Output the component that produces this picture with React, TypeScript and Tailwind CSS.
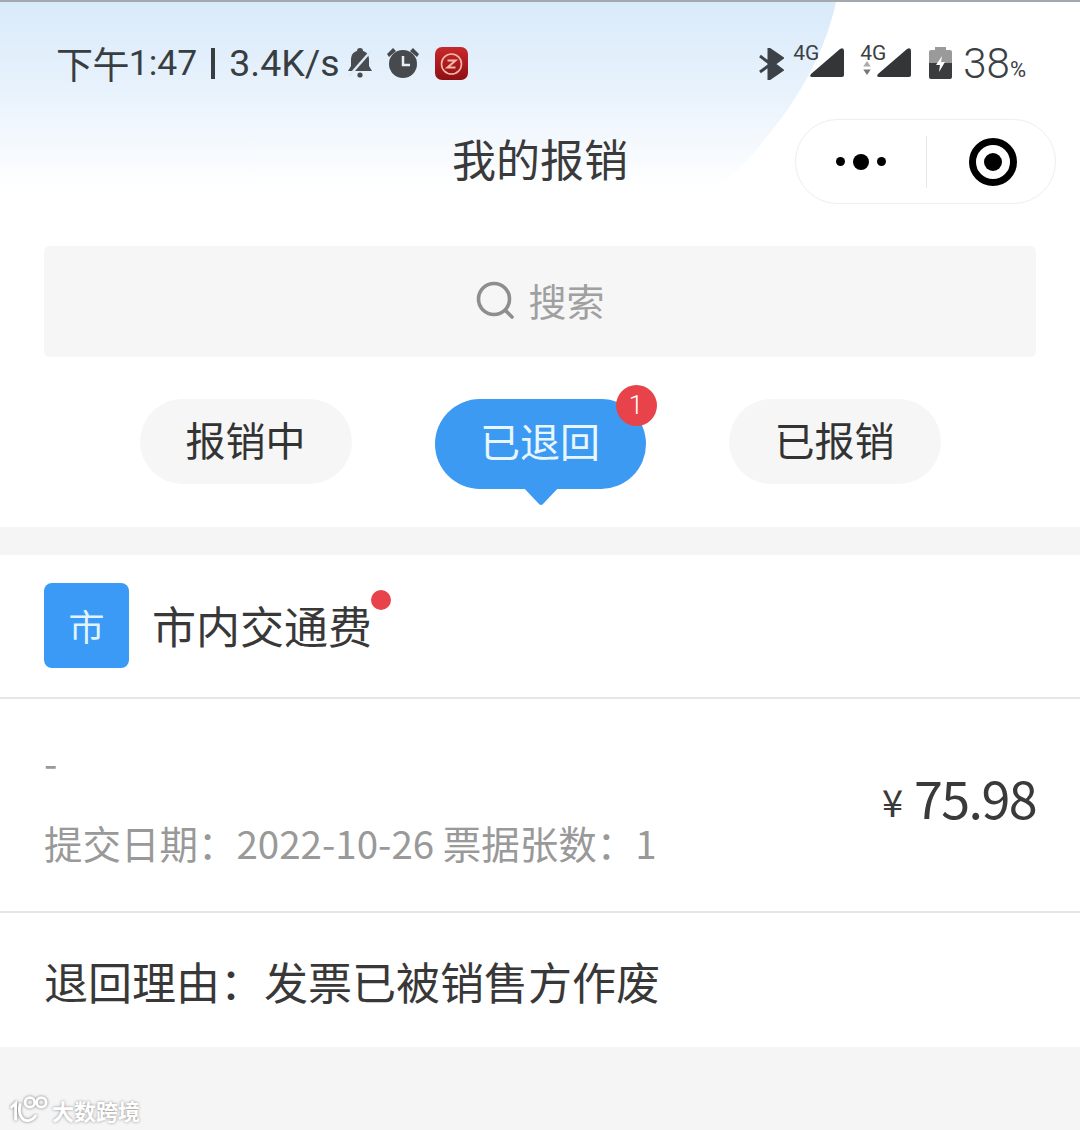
const cjk = "font-['Noto_Sans_CJK_SC','Noto_Sans',sans-serif]"

function Signal({ className = "" }: { className?: string }) {
  return (
    <svg width="36" height="31" viewBox="0 0 36 31" className={className}>
      <path d="M2 27 L31 2 Q35 0 35 4 L35 28 Q35 30 33 30 L3 30 Q0 30 2 27Z" fill="#333537" />
    </svg>
  )
}

function StatusBar() {
  return (
    <div className="flex h-[83px] items-end justify-between pl-[56px] pr-[54px]">
      <div className="flex items-center h-[44px]">
        <span className={`${cjk} text-[37px] leading-[44px] tracking-[-0.6px] text-[#383d42]`}>下午</span>
        <span className="font-['Roboto',sans-serif] text-[35.5px] leading-[44px] text-[#383d42]">1:47</span>
        <span className="ml-[14px] w-[4px] h-[31px] bg-[#383d42]" />
        <span className="ml-[14px] font-['Roboto',sans-serif] text-[37.5px] leading-[44px] text-[#383d42]">3.4K/s</span>
        {/* muted bell */}
        <svg width="28" height="32" viewBox="0 0 28 32" className="ml-[6px]">
          <path d="M14 1c2 0 3 1 3 3 4 1 6 4 6 9v6l3 5H2l3-5v-6c0-5 2-8 6-9 0-2 1-3 3-3z" fill="#484c50" />
          <circle cx="14" cy="28" r="2.6" fill="#484c50" />
          <path d="M3 29 L25 4" stroke="#dcebf8" strokeWidth="2.5" />
        </svg>
        {/* alarm */}
        <svg width="34" height="32" viewBox="0 0 34 32" className="ml-[12px]">
          <circle cx="17" cy="17" r="14" fill="#46494d" />
          <path d="M1 7 L7 1 L10 4 L3 10Z M33 7 L27 1 L24 4 L31 10Z" fill="#46494d" />
          <path d="M17 9 V18 H24" stroke="#e8eef4" strokeWidth="2.5" fill="none" />
        </svg>
        {/* red app icon */}
        <div className="ml-[15px] flex h-[33px] w-[33px] items-center justify-center rounded-[7px] bg-[linear-gradient(180deg,#c8282c,#8e1014)]">
          <svg width="25" height="25" viewBox="0 0 25 25" fill="none" stroke="#f9b7a8" strokeWidth="1.6">
            <circle cx="12.5" cy="13" r="10" />
            <path d="M8.5 9.5 H16.5 L8.5 16.5 H16.5" strokeWidth="2" />
          </svg>
        </div>
      </div>
      <div className="flex items-center h-[44px] translate-y-[1px]">
        {/* bluetooth */}
        <svg width="25" height="32" viewBox="0 0 25 32" className="mr-[7px]">
          <path d="M10 1 L23 10 L15 16 L23 22 L10 31Z M1 8 L21 23 M1 24 L21 9" fill="#3c4247" stroke="#3c4247" strokeWidth="3" />
        </svg>
        <div className="relative h-[40px] w-[54px]">
          <span className="absolute left-[2px] top-[-3px] font-['Roboto',sans-serif] text-[21px] leading-[24px] text-[#3b4045]">4G</span>
          <Signal className="absolute right-0 bottom-[6px]" />
        </div>
        <div className="relative ml-[14px] h-[40px] w-[53px]">
          <span className="absolute left-[1px] top-[-3px] font-['Roboto',sans-serif] text-[21px] leading-[24px] text-[#3b4045]">4G</span>
          <svg width="8" height="14" viewBox="0 0 8 15" className="absolute left-[4px] top-[17px]">
            <path d="M4 0 L8 6 H0Z" fill="#aaaaaa" />
            <path d="M4 15 L8 9 H0Z" fill="#777777" />
          </svg>
          <Signal className="absolute right-0 bottom-[6px]" />
        </div>
        {/* battery */}
        <svg width="23" height="32" viewBox="0 0 23 32" className="ml-[17px] mb-[3px]">
          <path d="M6 0 H17 V3 H21 Q23 3 23 5 V16 H0 V5 Q0 3 2 3 H6Z" fill="#9a9a9a" />
          <path d="M0 16 H23 V30 Q23 32 21 32 H2 Q0 32 0 30Z" fill="#3a3c3e" />
          <path d="M13 9 L7 18 H11 L10 25 L16 15 H12Z" fill="#ffffff" />
        </svg>
        <span className="ml-[11px] font-['Roboto',sans-serif] text-[42px] font-light leading-[44px] text-[#3b4045]">38</span>
        <span className="font-['Roboto',sans-serif] text-[22px] leading-[22px] mt-[12px] text-[#3b4045]">%</span>
      </div>
    </div>
  )
}

function TitleBar() {
  return (
    <div className="relative flex h-[84px] mt-[34px] items-center justify-center pb-[6px]">
      <span className={`${cjk} text-[44px] leading-[60px] text-[#3a3a3a]`}>我的报销</span>
      {/* capsule */}
      <div className="absolute right-[24px] top-0 flex h-[85px] w-[261px] items-center rounded-full border border-[#eeeeee] bg-white/70">
        <div className="flex w-[130px] items-center justify-center gap-[8px] pl-0">
          <span className="h-[9px] w-[9px] rounded-full bg-black" />
          <span className="h-[16px] w-[16px] rounded-full bg-black" />
          <span className="h-[9px] w-[9px] rounded-full bg-black" />
        </div>
        <div className="h-[52px] w-px bg-[#e8e8e8]" />
        <div className="flex flex-1 items-center justify-center pl-[4px]">
          <div className="flex h-[48px] w-[48px] items-center justify-center rounded-full border-[7px] border-black">
            <span className="h-[18px] w-[18px] rounded-full bg-black" />
          </div>
        </div>
      </div>
    </div>
  )
}

function SearchBox() {
  return (
    <div className="mx-[44px] mt-[43px] flex h-[111px] items-center justify-center rounded-[6px] bg-[#f6f6f6]">
      <svg width="42" height="42" viewBox="0 0 42 42" fill="none" stroke="#8e8e8e" strokeWidth="3.6" strokeLinecap="round" className="mr-[2px] mb-[2px]">
        <circle cx="19" cy="19" r="15.5" />
        <path d="M31 31 L37 37" />
      </svg>
      <span className={`${cjk} ml-[9px] pb-[4px] text-[38px] leading-[50px] text-[#a0a0a0]`}>搜索</span>
    </div>
  )
}

function TabPill({ label }: { label: string }) {
  return (
    <div className="flex h-[85px] w-[212px] items-center justify-center rounded-full bg-[#f6f6f6] pb-[6px]">
      <span className={`${cjk} text-[40px] leading-[50px] text-[#333333]`}>{label}</span>
    </div>
  )
}

function Tabs() {
  return (
    <div className="mt-[42px] flex justify-center gap-[83px]">
      <TabPill label="报销中" />
      <div className="relative flex h-[90px] w-[211px] items-center justify-center rounded-[45px] bg-[#3c9af2] pb-[8px]">
        <span className={`${cjk} text-[40px] leading-[50px] text-[#e8f7ff]`}>已退回</span>
        <span className="absolute right-[-11px] top-[-14px] flex h-[41px] w-[41px] items-center justify-center rounded-full bg-[#e8434b] font-['Roboto',sans-serif] text-[26px] font-light text-white">
          1
        </span>
        <svg width="38" height="20" viewBox="0 0 38 20" className="absolute bottom-[-17px] left-[87px]">
          <path d="M0 0 H38 L21 18 Q19 20 17 18Z" fill="#3c9af2" />
        </svg>
      </div>
      <TabPill label="已报销" />
    </div>
  )
}

export default function App() {
  return (
    <div className="relative h-[1130px] w-[1080px] overflow-hidden bg-[#f5f5f5]">
      <div className="relative h-[527px] border-t-2 border-[#a3a9ae] bg-white">
        {/* tinted header shape */}
        <svg width="1080" height="220" viewBox="0 0 1080 220" className="absolute left-0 top-0">
          <defs>
            <linearGradient id="sky" x1="0" y1="0" x2="0" y2="1">
              <stop offset="0" stopColor="#d9eafa" />
              <stop offset="0.4" stopColor="#e8f2fc" />
              <stop offset="0.85" stopColor="#ffffff" />
            </linearGradient>
          </defs>
          <path d="M0 0 H836 C825 50 800 100 743 163 C720 185 700 200 680 220 H0Z" fill="url(#sky)" />
        </svg>
        <div className="relative">
          <StatusBar />
          <TitleBar />
          <SearchBox />
          <Tabs />
        </div>
      </div>

      <div className="mt-[28px] bg-white">
        <div className="flex h-[144px] items-center border-b-2 border-[#e6e6e6] px-[44px] pb-[2px]">
          <div className="flex h-[85px] w-[85px] items-center justify-center rounded-[8px] bg-[#3a9af5]">
            <span className={`${cjk} text-[36px] leading-[44px] text-[#dff4ff]`}>市</span>
          </div>
          <div className="relative ml-[23px]">
            <span className={`${cjk} text-[44px] leading-[60px] text-[#383838]`}>市内交通费</span>
            <span className="absolute right-[-19px] top-[-5px] h-[20px] w-[20px] rounded-full bg-[#e8434b]" />
          </div>
        </div>

        <div className="flex h-[214px] items-center justify-between border-b-2 border-[#e6e6e6] px-[44px]">
          <div className="pb-[7px]">
            <div className={`${cjk} text-[38.5px] leading-[50px] text-[#999999]`}>-</div>
            <div className={`${cjk} mt-[31px] text-[38.5px] leading-[50px] text-[#999999]`}>
              提交日期：2022-10-26 票据张数：1
            </div>
          </div>
          <div className={`${cjk} flex items-start pb-[12px] text-[#3a3a3a]`}>
            <span className="mt-[4px] text-[38px] leading-[60px]">¥</span>
            <span className="ml-[11px] text-[52px] leading-[60px] tracking-[-1.6px]">75.98</span>
          </div>
        </div>

        <div className="flex h-[134px] items-center px-[44px] pt-[2px]">
          <span className={`${cjk} text-[44px] leading-[60px] text-[#383838]`}>退回理由：发票已被销售方作废</span>
        </div>
      </div>

      {/* watermark */}
      <div className="absolute bottom-[5px] left-[8px] flex items-center [text-shadow:0_0_3px_#8a8a8a]">
        <svg width="40" height="30" viewBox="0 0 42 30" fill="none" stroke="#ffffff" strokeWidth="3" className="[filter:drop-shadow(0_0_1.5px_#777777)]">
          <path d="M3 13 L8 8 V26 M13 8 C10 18 14 27 22 26 C26 25 29 22 29 20" />
          <circle cx="23" cy="7" r="5" />
          <circle cx="35" cy="7" r="5" />
        </svg>
        <span className={`${cjk} ml-[4px] text-[22px] font-bold leading-[30px] text-white`}>大数跨境</span>
      </div>
    </div>
  )
}
